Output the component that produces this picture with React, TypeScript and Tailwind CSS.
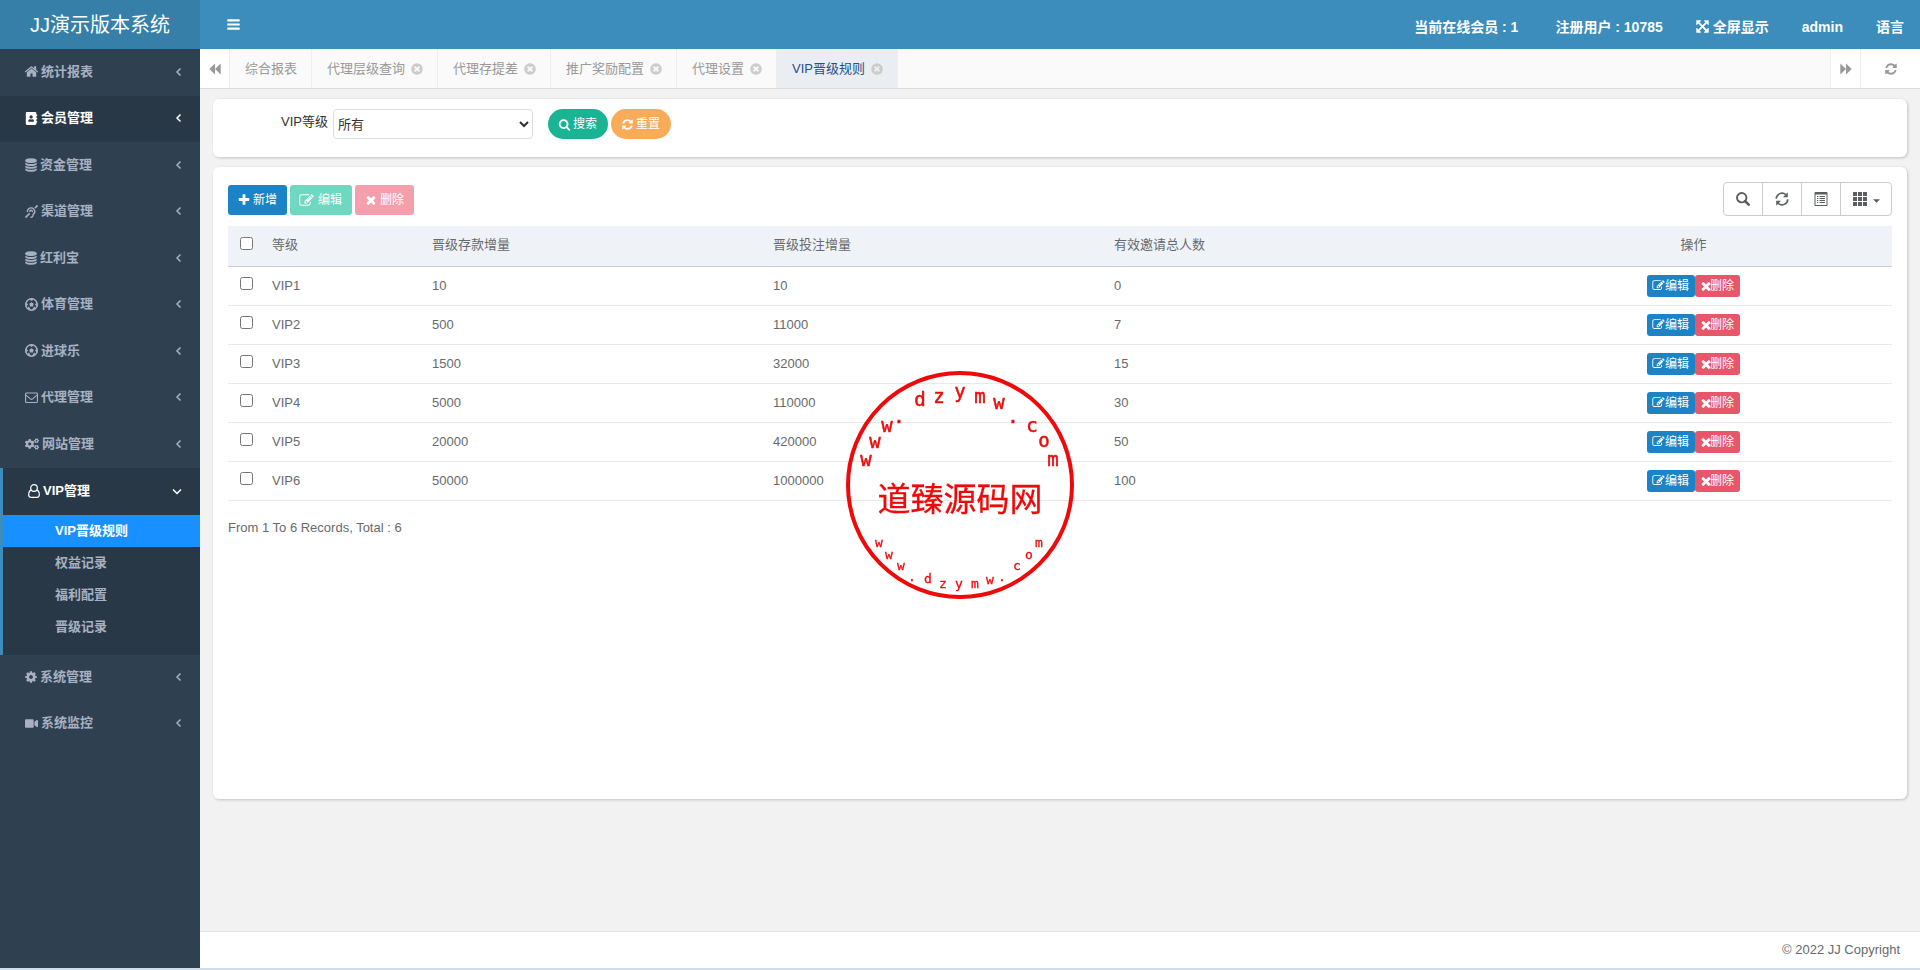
import React from 'react'
import clsx from 'clsx'
import { FaAddressBook, FaCogs, FaDeaf, FaVideo } from 'react-icons/fa'

const paths = {
  home: 'M1472 992v480q0 26-19 45t-45 19h-384v-384h-256v384h-384q-26 0-45-19t-19-45v-480q0-1 .5-3t.5-3l575-474 575 474q1 2 1 6zm223-69l-62 74q-8 9-21 11h-3q-13 0-21-7l-692-577-692 577q-12 8-24 7-13-2-21-11l-62-74q-8-10-7-23.500t11-21.500l719-599q32-26 76-26t76 26l244 204v-195q0-14 9-23t23-9h192q14 0 23 9t9 23v408l219 182q10 8 11 21.500t-7 23.500z',
  database:
    'M896 768q237 0 443-43t325-127v170q0 69-103 128t-280 93.500-385 34.500-385-34.500-280-93.500-103-128v-170q119 84 325 127t443 43zm0 768q237 0 443-43t325-127v170q0 69-103 128t-280 93.500-385 34.500-385-34.500-280-93.500-103-128v-170q119 84 325 127t443 43zm0-384q237 0 443-43t325-127v170q0 69-103 128t-280 93.500-385 34.500-385-34.500-280-93.500-103-128v-170q119 84 325 127t443 43zm0-1152q208 0 385 34.500t280 93.500 103 128v128q0 69-103 128t-280 93.500-385 34.500-385-34.500-280-93.500-103-128v-128q0-69 103-128t280-93.500 385-34.500z',
  cog: 'M1152 896q0-106-75-181t-181-75-181 75-75 181 75 181 181 75 181-75 75-181zm512-109v222q0 12-8 23t-20 13l-185 28q-19 54-39 91 35 50 107 138 10 12 10 25t-9 23q-27 37-99 108t-94 71q-12 0-26-9l-138-108q-44 23-91 38-16 136-29 186-7 28-36 28h-222q-14 0-24.500-8.500t-11.500-21.500l-28-184q-49-16-90-37l-141 107q-10 9-25 9-14 0-25-11-126-114-165-168-7-10-7-23 0-12 8-23 15-21 51-66.500t54-70.500q-27-50-41-99l-183-27q-13-2-21-12.500t-8-23.500v-222q0-12 8-23t19-13l186-28q14-46 39-92-40-57-107-138-10-12-10-24 0-10 9-23 26-36 98.500-107.500t94.500-71.500q13 0 26 10l138 107q44-23 91-38 16-136 29-186 7-28 36-28h222q14 0 24.500 8.500t11.500 21.500l28 184q49 16 90 37l142-107q9-9 24-9 13 0 25 10 129 119 165 170 7 8 7 22 0 12-8 23-15 21-51 66.500t-54 70.500q26 50 41 98l183 28q13 2 21 12.500t8 23.500z',
  refresh:
    'M1639 1056q0 5-1 7-64 268-268 434.500t-478 166.500q-146 0-282.500-55t-243.500-157l-129 129q-19 19-45 19t-45-19-19-45v-448q0-26 19-45t45-19h448q26 0 45 19t19 45-19 45l-137 137q71 66 161 102t187 36q134 0 250-65t186-179q11-17 53-117 8-23 30-23h192q13 0 22.500 9.500t9.500 22.500zm25-800v448q0 26-19 45t-45 19h-448q-26 0-45-19t-19-45 19-45l138-138q-148-137-349-137-134 0-250 65t-186 179q-11 17-53 117-8 23-30 23h-199q-13 0-22.500-9.500t-9.500-22.500v-7q65-268 270-434.500t480-166.500q146 0 284 55.500t245 156.500l130-129q19-19 45-19t45 19 19 45z',
  times:
    'M1490 1322q0 40-28 68l-136 136q-28 28-68 28t-68-28l-294-294-294 294q-28 28-68 28t-68-28l-136-136q-28-28-28-68t28-68l294-294-294-294q-28-28-28-68t28-68l136-136q28-28 68-28t68 28l294 294 294-294q28-28 68-28t68 28l136 136q28 28 28 68t-28 68l-294 294 294 294q28 28 28 68z',
  plus: 'M1600 736v192q0 40-28 68t-68 28h-416v416q0 40-28 68t-68 28h-192q-40 0-68-28t-28-68v-416h-416q-40 0-68-28t-28-68v-192q0-40 28-68t68-28h416v-416q0-40 28-68t68-28h192q40 0 68 28t28 68v416h416q40 0 68 28t28 68z',
  search:
    'M1216 832q0-185-131.500-316.500t-316.500-131.500-316.500 131.500-131.500 316.500 131.500 316.500 316.500 131.500 316.500-131.500 131.500-316.500zm512 832q0 52-38 90t-90 38q-54 0-90-38l-343-342q-179 124-399 124-143 0-273.500-55.500t-225-150-150-225-55.500-273.500 55.500-273.500 150-225 225-150 273.500-55.500 273.500 55.500 225 150 150 225 55.500 273.500q0 220-124 399l343 343q37 37 37 90z',
  close:
    'M1277 1122q0-26-19-45l-181-181 181-181q19-19 19-45 0-27-19-46l-90-90q-19-19-46-19-26 0-45 19l-181 181-181-181q-19-19-45-19-27 0-46 19l-90 90q-19 19-19 46 0 26 19 45l181 181-181 181q-19 19-19 45 0 27 19 46l90 90q19 19 46 19 26 0 45-19l181-181 181 181q19 19 45 19 27 0 46-19l90-90q19-19 19-46zm387-226q0 209-103 385.500t-279.500 279.500-385.500 103-385.500-103-279.500-279.500-103-385.500 103-385.500 279.500-279.500 385.500-103 385.500 103 279.500 279.500 103 385.500z',
  edit: 'M888 1184l116-116-152-152-116 116v56h96v96h56zm440-720q-16-16-33 1l-350 350q-17 17-1 33t33-1l350-350q17-17 1-33zm80 594v190q0 119-84.500 203.500t-203.500 84.500h-832q-119 0-203.500-84.500t-84.500-203.500v-832q0-119 84.500-203.500t203.500-84.500h832q63 0 117 25 15 7 18 23 3 17-9 29l-49 49q-14 14-32 8-23-6-45-6h-832q-66 0-113 47t-47 113v832q0 66 47 113t113 47h832q66 0 113-47t47-113v-126q0-13 9-22l64-64q15-15 35-7t20 29zm-96-738l288 288-672 672h-288v-288zm444 132l-92 92-288-288 92-92q28-28 68-28t68 28l152 152q28 28 28 68t-28 68z',
  expand:
    'M1411 541l-355 355 355 355 144-144q29-31 70-14 39 17 39 59v448q0 26-19 45t-45 19h-448q-42 0-59-40-17-39 14-69l144-144-355-355-355 355 144 144q31 30 14 69-17 40-59 40h-448q-26 0-45-19t-19-45v-448q0-42 40-59 39-17 69 14l144 144 355-355-355-355-144 144q-19 19-45 19-12 0-24-5-40-17-40-59v-448q0-26 19-45t45-19h448q42 0 59 40 17 39-14 69l-144 144 355 355 355-355-144-144q-31-30-14-69 17-40 59-40h448q26 0 45 19t19 45v448q0 42-39 59-13 5-25 5-26 0-45-19z',
  bars: 'M1664 1344v128q0 26-19 45t-45 19h-1408q-26 0-45-19t-19-45v-128q0-26 19-45t45-19h1408q26 0 45 19t19 45zm0-512v128q0 26-19 45t-45 19h-1408q-26 0-45-19t-19-45v-128q0-26 19-45t45-19h1408q26 0 45 19t19 45zm0-512v128q0 26-19 45t-45 19h-1408q-26 0-45-19t-19-45v-128q0-26 19-45t45-19h1408q26 0 45 19t19 45z',
}

function Icon({ name, className = 'size-3' }: { name: keyof typeof paths; className?: string }) {
  return (
    <svg
      viewBox="96 96 1600 1600"
      fill="currentColor"
      className={clsx('shrink-0 overflow-visible', className)}
      aria-hidden="true"
    >
      <path d={paths[name]} />
    </svg>
  )
}

function BallIcon() {
  return (
    <svg viewBox="0 0 14 14" className="size-[13px]" fill="none" stroke="currentColor" aria-hidden="true">
      <circle cx="7" cy="7" r="6.200" strokeWidth="1.500" />
      <path d="M7 4.600l2.400 1.700-.9 2.800h-3l-.9-2.800z" fill="currentColor" stroke="none" />
      <path
        d="M4.800 1.200L7 2.800l2.200-1.600zM1 5.200l1.800 1.600L1 9.300zM13 5.200l-1.800 1.600L13 9.300zM3.200 11.800l.8-2.300 1.800 3.200zM10.800 11.800L10 9.500l-1.800 3.200z"
        fill="currentColor"
        strokeWidth=".8"
      />
    </svg>
  )
}

function MailIcon() {
  return (
    <svg viewBox="0 0 14 14" className="size-[13px]" fill="none" stroke="currentColor" aria-hidden="true">
      <rect x=".6" y="2.100" width="12.800" height="10.300" rx="1" strokeWidth="1.200" />
      <path d="M1 4.500l4.800 4q1.200.9 2.400 0l4.800-4" strokeWidth="1.200" />
    </svg>
  )
}

function UserIcon() {
  return (
    <svg viewBox="0 0 12 14" className="h-3.5 w-3" fill="none" stroke="currentColor" strokeWidth="1.200" aria-hidden="true">
      <circle cx="6" cy="4" r="3.300" />
      <path d="M3.300 6.200C1.300 6.600.7 8.600.7 10.800c0 1.500.9 2.500 2.300 2.500h6c1.400 0 2.300-1 2.300-2.500 0-2.200-.6-4.200-2.600-4.600" />
    </svg>
  )
}

function DoubleArrow({ flip }: { flip?: boolean }) {
  return (
    <svg viewBox="0 0 12 12" className={clsx('size-3', flip && 'rotate-180')} fill="currentColor" aria-hidden="true">
      <path d="M6 .5v11L.3 6zM11.700.5v11L6 6z" />
    </svg>
  )
}

const menu = [
  { label: '统计报表', icon: <Icon name="home" className="size-[13px]" /> },
  { label: '会员管理', icon: <FaAddressBook className="size-[13px]" />, hover: true },
  { label: '资金管理', icon: <Icon name="database" /> },
  { label: '渠道管理', icon: <FaDeaf className="size-[13px]" /> },
  { label: '红利宝', icon: <Icon name="database" /> },
  { label: '体育管理', icon: <BallIcon /> },
  { label: '进球乐', icon: <BallIcon /> },
  { label: '代理管理', icon: <MailIcon /> },
  { label: '网站管理', icon: <FaCogs className="size-3.5" /> },
]

const systemMenu = [
  { label: '系统管理', icon: <Icon name="cog" /> },
  { label: '系统监控', icon: <FaVideo className="size-[13px]" /> },
]

const subMenu = ['VIP晋级规则', '权益记录', '福利配置', '晋级记录']

const tabs = ['综合报表', '代理层级查询', '代理存提差', '推广奖励配置', '代理设置', 'VIP晋级规则']

const rows = [
  ['VIP1', '10', '10', '0'],
  ['VIP2', '500', '11000', '7'],
  ['VIP3', '1500', '32000', '15'],
  ['VIP4', '5000', '110000', '30'],
  ['VIP5', '20000', '420000', '50'],
  ['VIP6', '50000', '1000000', '100'],
]

type MenuItemProps = {
  label: string
  icon: React.ReactNode
  hover?: boolean
  open?: boolean
}

function MenuLink({ label, icon, hover, open }: MenuItemProps) {
  return (
    <a
      href="#"
      className={clsx(
        'flex h-full items-center gap-[3px] pr-[18px] pb-0.5 pl-[25px]',
        hover && 'bg-[#293846] text-white',
        open && 'text-white',
      )}
    >
      {icon}
      <span className="flex-1">{label}</span>
      <svg
        viewBox="0 0 10 10"
        className={clsx('size-2.5', !open && 'translate-x-0.5')}
        fill="none"
        stroke="currentColor"
        strokeWidth="1.500"
        aria-hidden="true"
      >
        <path d={open ? 'M1 3.500l4 4 4-4' : 'M6.500 1.500L3 5l3.500 3.500'} />
      </svg>
    </a>
  )
}

function Sidebar() {
  return (
    <nav className="w-[200px] shrink-0 bg-[#2f4050] text-[13px] font-bold text-[#a7b1c2]">
      <ul>
        {menu.map((item) => (
          <li key={item.label} className="odd:h-[47px] even:h-[46px]">
            <MenuLink {...item} />
          </li>
        ))}
      </ul>
      <div className="border-l-3 border-[#3c8dbc] bg-[#293846] pb-3">
        <div className="h-[47px]">
          <MenuLink label="VIP管理" icon={<UserIcon />} open />
        </div>
        <ul>
          {subMenu.map((label, i) => (
            <li key={label}>
              <a
                href="#"
                className={clsx('flex h-8 items-center pl-[52px]', i === 0 && 'bg-[#1890ff] text-white')}
              >
                {label}
              </a>
            </li>
          ))}
        </ul>
      </div>
      <ul>
        {systemMenu.map((item) => (
          <li key={item.label} className="h-[46px]">
            <MenuLink {...item} />
          </li>
        ))}
      </ul>
    </nav>
  )
}

function Header() {
  return (
    <header className="flex h-[49px] bg-[#3c8dbc] text-white">
      <a href="#" className="flex w-[200px] items-center justify-center bg-[#367fa9] text-xl">
        JJ演示版本系统
      </a>
      <button type="button" aria-label="菜单" className="ml-6 flex w-[18px] items-center justify-center">
        <Icon name="bars" className="size-[13px]" />
      </button>
      <div className="ml-auto flex items-center gap-[33px] pt-1 pr-4 text-sm font-bold">
        <span className="mr-1">当前在线会员 : 1</span>
        <span>注册用户 : 10785</span>
        <a href="#" className="flex items-center gap-1">
          <Icon name="expand" className="size-[13px]" />
          全屏显示
        </a>
        <a href="#">admin</a>
        <a href="#">语言</a>
      </div>
    </header>
  )
}

function TabBar() {
  return (
    <div className="flex h-10 border-b border-[#dcdcdc] bg-[#fafafa] text-[13px] text-[#999]">
      <button
        type="button"
        aria-label="向左"
        className="flex w-[30px] items-center justify-center border-r border-[#eee] bg-white"
      >
        <DoubleArrow />
      </button>
      <div className="flex flex-1">
        {tabs.map((tab, i) => {
          const active = i === tabs.length - 1
          return (
            <a
              key={tab}
              href="#"
              className={clsx(
                'flex items-center gap-1.5 border-r border-[#eee] pr-3.5 pl-[15px]',
                active && 'bg-[#eaedf1] text-[#23508e]',
              )}
            >
              {tab}
              {i > 0 && <Icon name="close" className="size-3 text-[#ccc]" />}
            </a>
          )
        })}
      </div>
      <button
        type="button"
        aria-label="向右"
        className="flex w-[30px] items-center justify-center border-l border-[#eee] bg-white"
      >
        <DoubleArrow flip />
      </button>
      <button
        type="button"
        aria-label="刷新"
        className="flex w-[60px] items-center justify-center border-l border-[#eee] bg-white"
      >
        <Icon name="refresh" />
      </button>
    </div>
  )
}

function SearchCard() {
  return (
    <form className="flex h-[58px] items-start rounded-md bg-white pt-2.5 pl-[68px] shadow-[1px_1px_3px_rgba(0,0,0,0.2)]">
      <label htmlFor="level" className="text-[13px] leading-[26px] text-[#333]">
        VIP等级
      </label>
      <select
        id="level"
        className="ml-[5px] h-[30px] w-[200px] rounded border border-[#ddd] bg-white text-[13px] text-[#333]"
      >
        <option>所有</option>
      </select>
      <button
        type="button"
        className="ml-[15px] flex h-[30px] items-center gap-[3px] rounded-full bg-[#1ab394] px-[11px] text-xs text-white"
      >
        <Icon name="search" className="size-[11px]" />
        搜索
      </button>
      <button
        type="button"
        className="ml-[3px] flex h-[30px] items-center gap-[3px] rounded-full bg-[#f8ac59] px-[11px] text-xs text-white"
      >
        <Icon name="refresh" className="size-[11px]" />
        重置
      </button>
    </form>
  )
}

function Toolbar() {
  const btn = 'flex h-[30px] items-center gap-[3px] rounded-[3px] px-2.5 text-xs text-white'
  const tool = 'flex w-[39px] items-center justify-center border-r border-[#ccc]'
  return (
    <div className="flex justify-between">
      <div className="flex gap-[3px] pt-[3px]">
        <button type="button" className={clsx(btn, 'bg-[#1c84c6]')}>
          <Icon name="plus" />
          新增
        </button>
        <button type="button" className={clsx(btn, 'bg-[#70d8c1]')}>
          <Icon name="edit" className="mr-0.5 size-[13px]" />
          编辑
        </button>
        <button type="button" className={clsx(btn, 'bg-[#f49fab]')}>
          <Icon name="times" />
          删除
        </button>
      </div>
      <div className="flex h-[34px] rounded border border-[#ccc] text-[#5c5f61]">
        <button type="button" aria-label="搜索" className={tool}>
          <svg viewBox="0 0 14 14" className="size-3.5" fill="none" stroke="currentColor" aria-hidden="true">
            <circle cx="5.700" cy="5.700" r="4.700" strokeWidth="1.900" />
            <path d="M9 9l3.700 3.700" strokeWidth="2.500" strokeLinecap="round" />
          </svg>
        </button>
        <button type="button" aria-label="刷新" className={tool}>
          <svg viewBox="0 0 14 14" className="size-3.5" fill="none" stroke="currentColor" strokeWidth="1.600" aria-hidden="true">
            <path d="M1.200 6.600A5.800 5.800 0 0 1 10.800 2.600M12.800 7.400A5.800 5.800 0 0 1 3.200 11.400" />
            <path d="M12.800.3v4.900H8zM1.200 13.700V8.800H6z" fill="currentColor" stroke="none" />
          </svg>
        </button>
        <button type="button" aria-label="详情" className={tool}>
          <svg viewBox="0 0 14 14" className="size-3.5" fill="none" stroke="currentColor" aria-hidden="true">
            <path d="M1 .5h12v13H1z" />
            <path d="M1 1.500h12" strokeWidth="2" />
            <path d="M3 4.500h1.300M3 6.500h1.300M3 8.500h1.300M3 10.500h1.300M5.500 4.500H11M5.500 6.500H11M5.500 8.500H11M5.500 10.500H11" />
          </svg>
        </button>
        <button type="button" aria-label="列" className="flex w-[50px] items-center justify-center gap-1.5">
          <svg viewBox="0 0 14 14" className="size-3.5" fill="currentColor" aria-hidden="true">
            <path d="M0 0h4v4H0zM5 0h4v4H5zM10 0h4v4h-4zM0 5h4v4H0zM5 5h4v4H5zM10 5h4v4h-4zM0 10h4v4H0zM5 10h4v4H5zM10 10h4v4h-4z" />
          </svg>
          <svg viewBox="0 0 8 4" className="mt-1 h-1 w-[7px]" fill="currentColor" aria-hidden="true">
            <path d="M0 0h8L4 4z" />
          </svg>
        </button>
      </div>
    </div>
  )
}

function RulesTable() {
  const action = 'flex h-[22px] items-center rounded-[3px] px-1.5 text-xs text-white'
  return (
    <table className="mt-2.5 w-full border-collapse text-left text-[13px]">
      <thead>
        <tr className="h-10 border-b border-[#ccc] bg-[#eff3f8]">
          <th className="w-9 pb-1 text-center">
            <input type="checkbox" aria-label="全选" className="mx-auto block size-[13px]" />
          </th>
          <th className="w-[160px] px-2 pb-0.5 font-normal">等级</th>
          <th className="w-[341px] px-2 pb-0.5 font-normal">晋级存款增量</th>
          <th className="w-[341px] px-2 pb-0.5 font-normal">晋级投注增量</th>
          <th className="w-[389px] px-2 pb-0.5 font-normal">有效邀请总人数</th>
          <th className="w-[397px] px-2 pb-0.5 text-center font-normal">操作</th>
        </tr>
      </thead>
      <tbody>
        {rows.map(([level, ...cells]) => (
          <tr key={level} className="h-[39px] border-b border-[#e7eaec]">
            <td className="pb-1">
              <input type="checkbox" aria-label={level} className="mx-auto block size-[13px]" />
            </td>
            <td className="px-2">{level}</td>
            {cells.map((cell, i) => (
              <td key={i} className="px-2">
                {cell}
              </td>
            ))}
            <td className="px-2">
              <div className="flex justify-center">
                <button type="button" className={clsx(action, 'bg-[#1c84c6]')}>
                  <Icon name="edit" className="mr-px size-[11px]" />
                  编辑
                </button>
                <button type="button" className={clsx(action, 'bg-[#e9566a]')}>
                  <Icon name="times" className="-ml-px -mr-0.5 size-3" />
                  删除
                </button>
              </div>
            </td>
          </tr>
        ))}
      </tbody>
    </table>
  )
}

// [letter, x, baseline] around the centre of the seal
const topLetters: [string, number, number][] = [
  ['w', -94, -19],
  ['w', -85, -37],
  ['w', -73, -53],
  ['.', -61, -62],
  ['d', -40, -79],
  ['z', -21, -82],
  ['y', 0, -87],
  ['m', 20, -82],
  ['w', 39, -76],
  ['.', 53, -62],
  ['c', 72, -53],
  ['o', 84, -38],
  ['m', 93, -19],
]

const bottomLetters: [string, number, number][] = [
  ['w', -81, 62],
  ['w', -71, 74],
  ['w', -59, 85],
  ['.', -48, 96],
  ['d', -32, 98],
  ['z', -17, 103],
  ['y', -1, 103],
  ['m', 15, 103],
  ['w', 30, 99],
  ['.', 42, 96],
  ['c', 57, 85],
  ['o', 69, 74],
  ['m', 79, 62],
]

function Seal() {
  return (
    <svg
      viewBox="-115 -115 230 230"
      className="pointer-events-none fixed top-1/2 left-1/2 size-[230px] -translate-x-1/2 -translate-y-1/2"
      fill="#ee0a0a"
      textAnchor="middle"
    >
      <circle r="112" fill="none" stroke="#ee0a0a" strokeWidth="4" />
      <g className="font-['DejaVu_Sans_Mono',monospace] text-[19px]" stroke="#ee0a0a" strokeWidth=".5">
        {topLetters.map(([c, x, y]) => (
          <text key={x} x={x} y={y}>
            {c}
          </text>
        ))}
      </g>
      <text y="26" className="text-[33px]" stroke="#ee0a0a" strokeWidth=".3">
        道臻源码网
      </text>
      <g className="font-['DejaVu_Sans_Mono',monospace] text-[13px]" stroke="#ee0a0a" strokeWidth=".3">
        {bottomLetters.map(([c, x, y]) => (
          <text key={x} x={x} y={y}>
            {c}
          </text>
        ))}
      </g>
    </svg>
  )
}

export default function App() {
  return (
    <div className="flex min-h-screen flex-col border-b-2 border-[#d0dde8] font-['Liberation_Sans','Noto_Sans_CJK_SC',sans-serif] text-[#676a6c]">
      <Header />
      <div className="flex flex-1">
        <Sidebar />
        <div className="flex min-w-0 flex-1 flex-col bg-[#f2f2f2]">
          <TabBar />
          <main className="flex flex-1 flex-col gap-2.5 px-[13px] pt-2.5">
            <SearchCard />
            <section className="min-h-[632px] rounded-md bg-white px-[15px] pt-[15px] shadow-[1px_1px_3px_rgba(0,0,0,0.2)]">
              <Toolbar />
              <RulesTable />
              <p className="mt-[17px] text-[13px] leading-5">From 1 To 6 Records, Total : 6</p>
            </section>
          </main>
          <footer className="flex h-[37px] items-center justify-end border-t border-[#e0e3e6] bg-white pr-5 text-[13px]">
            © 2022 JJ Copyright
          </footer>
        </div>
      </div>
      <Seal />
    </div>
  )
}
